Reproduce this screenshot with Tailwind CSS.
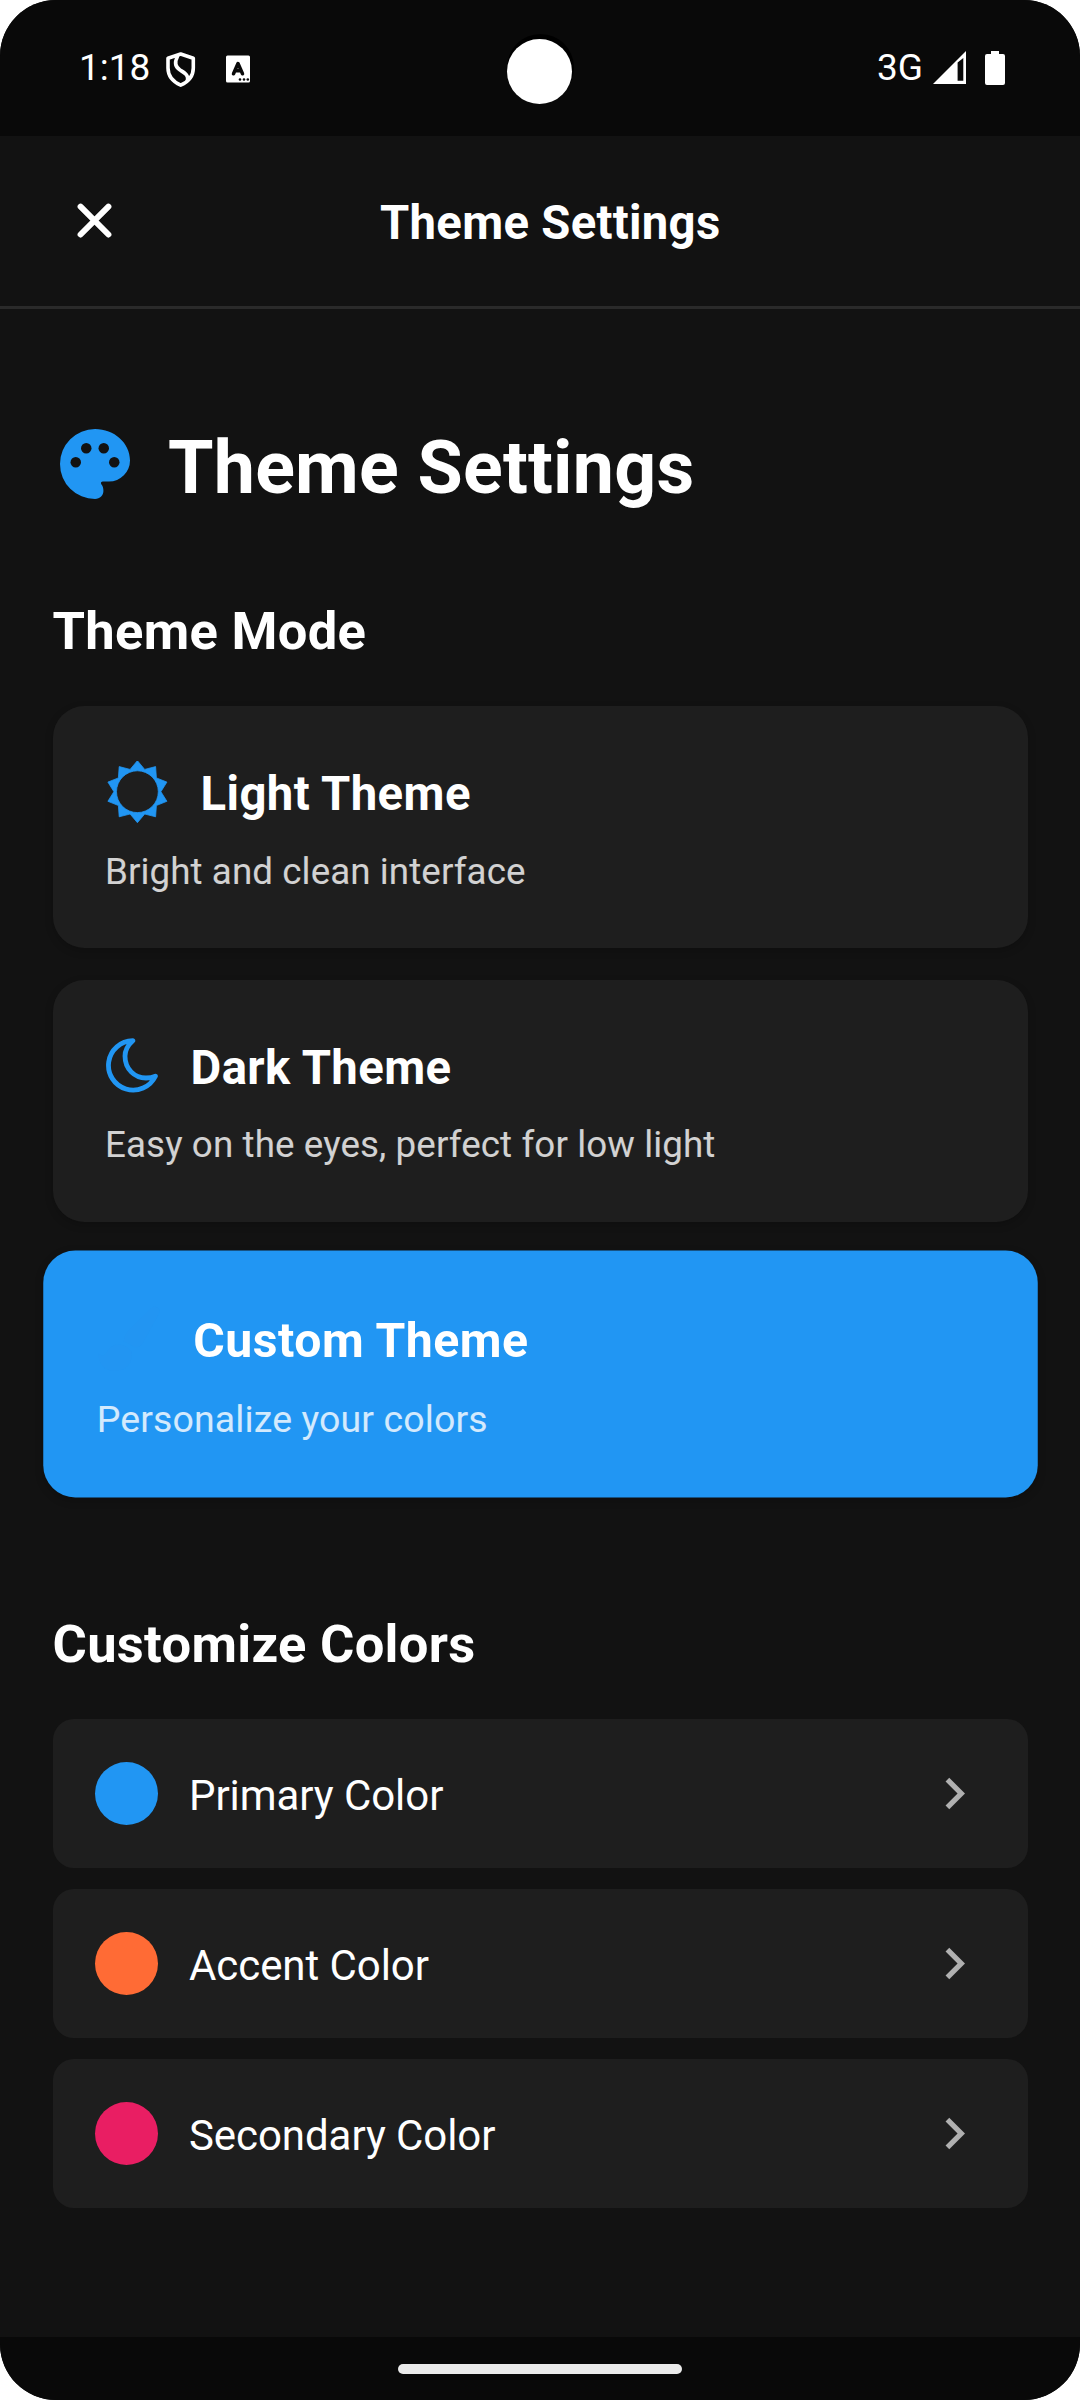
<!DOCTYPE html>
<html lang="en">
<head>
<meta charset="utf-8">
<title>Theme Settings</title>
<script src="https://cdn.jsdelivr.net/npm/@tailwindcss/browser@4"></script>
</head>
<body class="bg-white font-['Roboto',sans-serif] text-white">
<div class="relative flex h-[2400px] w-[1080px] flex-col overflow-hidden rounded-[56px] bg-[#121212]">

  <!-- Status bar -->
  <div class="relative flex h-[136px] shrink-0 items-start bg-[#090909] pl-[79px] pr-[75px] pt-[46px]">
    <span class="w-[85px] text-[37px] leading-[44px]">1:18</span>
    <svg class="mt-[4px] h-[40px] w-[34px]" viewBox="0 0 34 40" fill="none" stroke="#fff" stroke-width="3.6" stroke-linejoin="round" stroke-linecap="round">
      <path d="M16.7 4 4 8.3V18c0 7.500 4.500 13.500 12.700 17.200C25 31.500 29.300 25.500 29.300 18V8.300z"/>
      <path d="M13.500 6.500C10 13 11.500 17 16 20c5.500 3.500 8.500 5 7.500 10.500"/>
    </svg>
    <svg class="ml-[27px] mt-[8px] h-[30px] w-[26px]" viewBox="0 0 26 30">
      <rect x="1" y="1.500" width="24" height="27" rx="1.500" fill="#fff"/>
      <path d="M8.500 19.800 13 9.500 17.500 19.800M10 16.700h6" fill="none" stroke="#090909" stroke-width="3.500" stroke-linecap="round" stroke-linejoin="round"/>
      <circle cx="15" cy="25.500" r="1.300" fill="#090909"/><circle cx="19" cy="25.500" r="1.300" fill="#090909"/><circle cx="22.800" cy="25.500" r="1.300" fill="#090909"/>
    </svg>
    <div class="absolute left-[507px] top-[34px] size-[67px] rounded-full bg-black"></div>
    <div class="absolute left-[507px] top-[39px] size-[65px] rounded-full bg-white"></div>
    <span class="ml-auto text-[37px] font-[450] leading-[44px]">3G</span>
    <svg class="ml-[10px] mt-[5px] h-[33px] w-[34px]" viewBox="0 0 34 33" fill="#fff">
      <path fill-rule="evenodd" d="M0 33 33 0V33zM24.600 11.500V29.700H30.300V7z"/>
    </svg>
    <svg class="ml-[18px] mt-[5px] h-[34px] w-[20px]" viewBox="0 0 20 34" fill="#fff">
      <path d="M6 0h8v3h4q2 0 2 2v27q0 2-2 2H2q-2 0-2-2V5q0-2 2-2h4z"/>
    </svg>
  </div>

  <!-- Header -->
  <div class="flex h-[173px] shrink-0 items-center border-b-[3px] border-[#2a2a2a] px-[63px]">
    <svg class="size-[63px]" viewBox="0 0 63 63" fill="none" stroke="#fff" stroke-width="6" stroke-linecap="round">
      <path d="M17.600 16.700 45.400 44.500M45.400 16.700 17.600 44.500"/>
    </svg>
    <h1 class="ml-[254px] pt-[4px] text-[47.250px] font-bold leading-[56px] tracking-[0.3px] whitespace-nowrap">Theme Settings</h1>
  </div>

  <!-- Content -->
  <div class="flex flex-1 flex-col px-[52.5px] pt-[113px]">
    <div class="flex h-[84px] items-center">
      <svg class="size-[84px]" viewBox="0 0 24 24" fill="#2196f3">
        <path d="M12 22A10 10 0 0 1 2 12 10 10 0 0 1 12 2C17.500 2 22 6 22 11A6 6 0 0 1 16 17H14.200C13.900 17 13.700 17.200 13.700 17.500 13.700 17.600 13.800 17.700 13.800 17.800 14.200 18.300 14.400 18.900 14.400 19.500 14.500 20.900 13.400 22 12 22Z"/>
        <g fill="#121212"><circle cx="6.500" cy="11.500" r="1.500"/><circle cx="9.500" cy="7.500" r="1.500"/><circle cx="14.500" cy="7.500" r="1.500"/><circle cx="17.500" cy="11.500" r="1.500"/></g>
      </svg>
      <h2 class="ml-[31.5px] pt-[8px] text-[73.5px] font-bold leading-[84px] tracking-[0.24px] whitespace-nowrap">Theme Settings</h2>
    </div>

    <h3 class="mt-[94px] text-[52.5px] font-bold leading-[62px] tracking-[0.3px]">Theme Mode</h3>

    <div class="mt-[44px] flex flex-col gap-[31.5px]">
      <div class="h-[242px] rounded-[31.5px] bg-[#1e1e1e] px-[52.5px] pt-[53px] shadow-[0_3px_8px_rgba(0,0,0,0.2)]">
        <div class="flex h-[66px] items-center">
          <svg class="size-[63px] shrink-0" viewBox="-32.4 -30.700 63 63" fill="#2196f3" stroke="#2196f3" stroke-width="0.800" stroke-linejoin="round">
            <path fill-rule="evenodd" d="M0-31 7.300-22.300 18.200-25.100 19-13.800 29.500-9.600 23.500 0 29.500 9.600 19 13.800 18.200 25.100 7.300 22.300 0 31-7.300 22.300-18.200 25.100-19 13.800-29.500 9.600-23.500 0-29.500-9.600-19-13.800-18.200-25.100-7.300-22.300ZM-20.900 0A20.900 20.900 0 1 0 20.900 0 20.900 20.900 0 1 0-20.900 0Z"/>
          </svg>
          <span class="ml-[32.5px] pt-[4px] text-[47.250px] font-bold leading-[56px] tracking-[0.42px]">Light Theme</span>
        </div>
        <p class="mt-[24.5px] text-[36.750px] leading-[44px] tracking-[0.08px] text-white/80">Bright and clean interface</p>
      </div>
      <div class="h-[242px] rounded-[31.5px] bg-[#1e1e1e] px-[52.5px] pt-[53px] shadow-[0_3px_8px_rgba(0,0,0,0.2)]">
        <div class="flex h-[66px] items-center">
          <svg class="h-[63px] w-[53px] shrink-0" viewBox="105 1034 53 63" fill="none" stroke="#2196f3" stroke-width="4.800" stroke-linejoin="round">
            <path d="M132.800 1040.700A24.700 24.700 0 1 0 155.400 1076.200C153 1077.300 150 1078 146 1078 134.500 1078 125 1069 125 1056 125 1050 128 1045 132.800 1040.700Z"/>
          </svg>
          <span class="ml-[32.5px] pt-[4px] text-[47.250px] font-bold leading-[56px] tracking-[0.42px]">Dark Theme</span>
        </div>
        <p class="mt-[24.5px] text-[36.750px] leading-[44px] tracking-[0.1px] text-white/80">Easy on the eyes, perfect for low light</p>
      </div>
      <div class="h-[242px] scale-[1.02] rounded-[31.5px] bg-[#2196f3] px-[52.5px] pt-[53px] shadow-[0_3px_8px_rgba(0,0,0,0.2)]">
        <div class="flex h-[66px] items-center">
          <svg class="h-[63px] w-[63px] shrink-0" viewBox="0 0 63 63" fill="#2295f2">
            <path d="M56 0c4 0 6 3 5 6L45 35q-3 5-8 5l-11-6q0-5 3-9L51 3q2-3 5-3zM21 37q8 0 13 8 0 18-17 18Q2 63 1 46q5 4 8-1 4-8 12-8z"/>
          </svg>
          <span class="ml-[31.5px] pt-[4px] text-[47.250px] font-bold leading-[56px] tracking-[0.5px]">Custom Theme</span>
        </div>
        <p class="mt-[24.5px] text-[36.750px] leading-[44px] tracking-[0.1px] text-white/80">Personalize your colors</p>
      </div>
    </div>

    <h3 class="mt-[118px] text-[52.5px] font-bold leading-[62px] tracking-[0.3px]">Customize Colors</h3>

    <div class="mt-[44px] flex flex-col gap-[21px]">
      <div class="flex h-[149px] items-center rounded-[21px] bg-[#1e1e1e] px-[42px]">
        <div class="size-[63px] rounded-full bg-[#2196f3]"></div>
        <span class="ml-[31.5px] flex-1 pt-[4px] text-[42px] leading-[50px] tracking-[-0.07px]">Primary Color</span>
        <svg class="size-[63px]" viewBox="0 0 24 24" fill="#b0b0b0"><path d="M10 6 8.590 7.410 13.170 12l-4.580 4.590L10 18l6-6z"/></svg>
      </div>
      <div class="flex h-[149px] items-center rounded-[21px] bg-[#1e1e1e] px-[42px]">
        <div class="size-[63px] rounded-full bg-[#ff6b35]"></div>
        <span class="ml-[31.5px] flex-1 pt-[4px] text-[42px] leading-[50px] tracking-[-0.07px]">Accent Color</span>
        <svg class="size-[63px]" viewBox="0 0 24 24" fill="#b0b0b0"><path d="M10 6 8.590 7.410 13.170 12l-4.580 4.590L10 18l6-6z"/></svg>
      </div>
      <div class="flex h-[149px] items-center rounded-[21px] bg-[#1e1e1e] px-[42px]">
        <div class="size-[63px] rounded-full bg-[#e91e63]"></div>
        <span class="ml-[31.5px] flex-1 pt-[4px] text-[42px] leading-[50px] tracking-[-0.07px]">Secondary Color</span>
        <svg class="size-[63px]" viewBox="0 0 24 24" fill="#b0b0b0"><path d="M10 6 8.590 7.410 13.170 12l-4.580 4.590L10 18l6-6z"/></svg>
      </div>
    </div>
  </div>

  <!-- Gesture bar -->
  <div class="flex h-[63px] shrink-0 justify-center bg-[#090909] pt-[27px]">
    <div class="h-[10px] w-[284px] rounded-[5px] bg-[#ebebeb]"></div>
  </div>
</div>
</body>
</html>
